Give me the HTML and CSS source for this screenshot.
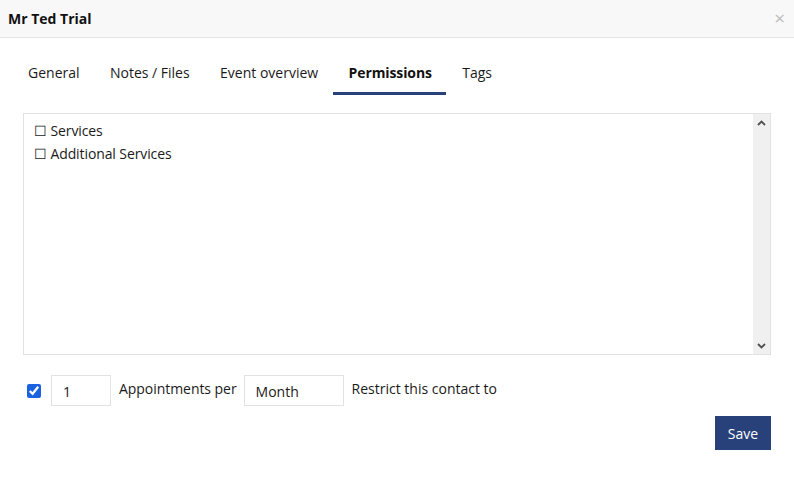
FILE: index.html
```html
<!DOCTYPE html>
<html>
<head>
<meta charset="utf-8">
<link rel="stylesheet" href="styles.css">
</head>
<body>
<div class="dialog">
  <div class="header">
    <span class="title">Mr Ted Trial</span>
    <span class="close">×</span>
  </div>
  <div class="tabs">
    <div class="tab">General</div>
    <div class="tab">Notes / Files</div>
    <div class="tab">Event overview</div>
    <div class="tab active">Permissions</div>
    <div class="tab">Tags</div>
  </div>
  <div class="listbox">
    <div class="items">
      <div class="item">☐ Services</div>
      <div class="item">☐ Additional Services</div>
    </div>
    <div class="scrollbar">
      <svg class="arrow" width="9" height="6" viewBox="0 0 9 6"><path d="M1 5 L4.5 1.5 L8 5" fill="none" stroke="#505050" stroke-width="1.8"/></svg>
      <svg class="arrow" width="9" height="6" viewBox="0 0 9 6"><path d="M1 1 L4.5 4.5 L8 1" fill="none" stroke="#505050" stroke-width="1.8"/></svg>
    </div>
  </div>
  <div class="limit-row">
    <input type="checkbox" class="check" checked>
    <div class="field num">1</div>
    <span class="label lead">Appointments per</span>
    <div class="field period">Month</div>
    <span class="label">Restrict this contact to</span>
  </div>
  <div class="actions">
    <button class="save">Save</button>
  </div>
</div>
</body>
</html>
```
FILE: styles.css
```css
* { box-sizing: border-box; }
html, body { margin: 0; padding: 0; background: #fff; }
body {
  font-family: "Open Sans", "Noto Sans", sans-serif;
  font-size: 14px;
  color: #1a1a1a;
  width: 794px;
  height: 494px;
  overflow: hidden;
}
.header {
  height: 38px;
  background: #f8f8f8;
  border-bottom: 1px solid #e4e4e4;
  display: flex;
  align-items: center;
  justify-content: space-between;
  padding: 0 9px 0 8px;
}
.title {
  font-weight: 700;
  font-size: 14px;
  color: #111;
}
.close {
  color: #bdbdbd;
  font-size: 19px;
  line-height: 1;
  margin-top: -1px;
}
.tabs {
  display: flex;
  padding: 0 0 0 12px;
  margin-top: 16px;
  height: 41px;
}
.tab {
  padding: 9px 14.4px 0 16px;
  height: 41px;
  color: #1a1a1a;
}
.tab.active {
  font-weight: 700;
  letter-spacing: -0.1px;
  border-bottom: 3px solid #28417a;
  color: #111;
}
.listbox {
  margin: 18px 23px 0 23px;
  height: 242px;
  border: 1px solid #e2e2e2;
  display: flex;
}
.items {
  flex: 1;
  padding: 5px 0 0 10px;
}
.item {
  line-height: 23px;
  color: #1a1a1a;
  letter-spacing: -0.1px;
}
.scrollbar {
  width: 17px;
  background: #f0f0f0;
  display: flex;
  flex-direction: column;
  justify-content: space-between;
  align-items: center;
  padding: 6px 0 5px 0;
}
.arrow { display: block; }
.limit-row {
  display: flex;
  align-items: center;
  margin: 20px 0 0 27px;
  height: 31px;
}
.check {
  margin: 0 10px 0 0;
  width: 14px;
  height: 14px;
  accent-color: #1a62e0;
}
.field {
  height: 31px;
  border: 1px solid #e2e2e2;
  display: flex;
  align-items: center;
  padding-top: 1px;
}
.num { width: 60px; padding-left: 11px; }
.period { width: 100px; padding-left: 11px; padding-top: 2px; }
.label {
  margin: -4px 8px 0 8px;
}
.label.lead { margin-right: 7px; letter-spacing: -0.05px; }
.actions {
  display: flex;
  justify-content: flex-end;
  margin: 10px 23px 0 0;
}
.save {
  font-family: "Open Sans", "Noto Sans", sans-serif;
  font-size: 14px;
  background: #28417a;
  color: #fff;
  border: none;
  width: 56px;
  height: 34px;
  padding: 0;
  border-radius: 0;
}
```
